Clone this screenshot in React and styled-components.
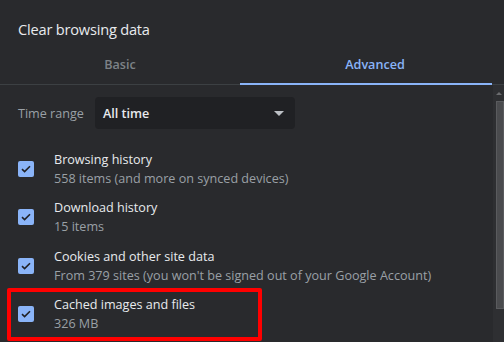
import React from 'react';
import styled, { createGlobalStyle } from 'styled-components';

const GlobalStyle = createGlobalStyle`
    html, body {
        margin: 0;
        padding: 0;
        background: #292a2d;
    }
    body {
        font-family: "Open Sans", "Liberation Sans", sans-serif;
    }
`;

const Dialog = styled.div`
    width: 504px;
    height: 342px;
    background: #292a2d;
    display: flex;
    flex-direction: column;
    overflow: hidden;
`;

const Title = styled.div`
    padding: 19px 0 0 18px;
    height: 25px;
    font-size: 14.6px;
    color: #e8eaed;
    letter-spacing: -0.2px;
`;

const Tabs = styled.div`
    display: flex;
    height: 40px;
    border-bottom: 1px solid #3c4043;
    padding-right: 12px;
`;

const Tab = styled.div`
    width: ${p => (p.active ? '252px' : '240px')};
    box-sizing: border-box;
    padding-left: ${p => (p.active ? '18px' : '0')};
    padding-top: 2px;
    display: flex;
    align-items: center;
    justify-content: center;
    font-size: 12.6px;
    font-weight: 600;
    color: ${p => (p.active ? '#8ab4f8' : '#9aa0a6')};
    opacity: ${p => (p.active ? 1 : 0.75)};
    border-bottom: 2px solid ${p => (p.active ? '#8ab4f8' : 'transparent')};
    margin-bottom: -1px;
`;

const Body = styled.div`
    flex: 1;
    display: flex;
`;

const Content = styled.div`
    flex: 1;
    padding: 12px 0 0 18px;
    display: flex;
    flex-direction: column;
`;

const RangeRow = styled.div`
    display: flex;
    align-items: center;
    gap: 11px;
    margin-bottom: 16px;
`;

const RangeLabel = styled.div`
    font-size: 12.6px;
    color: #9aa0a6;
`;

const Select = styled.div`
    width: 200px;
    height: 32px;
    box-sizing: border-box;
    background: #202124;
    border-radius: 4px;
    display: flex;
    align-items: center;
    justify-content: space-between;
    padding: 0 11px 0 8px;
    font-size: 12.6px;
    font-weight: 600;
    color: #e8eaed;
`;

const Caret = styled.div`
    width: 0;
    height: 0;
    border-left: 5px solid transparent;
    border-right: 5px solid transparent;
    border-top: 5px solid #bdc1c6;
`;

const Row = styled.div`
    position: relative;
    height: 48.3px;
    display: flex;
    align-items: center;
    gap: 20px;

    &::after {
        content: '';
        display: ${p => (p.highlighted ? 'block' : 'none')};
        position: absolute;
        left: -11px;
        top: -2px;
        width: 255px;
        height: 53px;
        box-sizing: border-box;
        border: 4px solid #ff0000;
        border-radius: 2px;
    }
`;

const Box = styled.div`
    width: 16px;
    height: 16px;
    border-radius: 2px;
    background: #8ab4f8;
    display: flex;
    align-items: center;
    justify-content: center;
    flex-shrink: 0;
`;

const Texts = styled.div`
    display: flex;
    flex-direction: column;
    gap: 2px;
`;

const RowTitle = styled.div`
    font-size: 12.6px;
    color: #e8eaed;
    white-space: nowrap;
`;

const RowSub = styled.div`
    font-size: 12.6px;
    color: #9aa0a6;
    white-space: nowrap;
`;

const Scrollbar = styled.div`
    width: 11px;
    background: #2e2f32;
    display: flex;
    flex-direction: column;
    align-items: flex-end;
`;

const Arrow = styled.div`
    margin: 7px 2px 6px 0;
    width: 0;
    height: 0;
    border-left: 3px solid transparent;
    border-right: 3px solid transparent;
    border-bottom: 3px solid #6b6c6f;
`;

const Thumb = styled.div`
    width: 8px;
    height: 208px;
    background: #4a4b4e;
    border: 1px solid #5a5b5e;
    box-sizing: border-box;
`;

const items = [
    { title: 'Browsing history', sub: '558 items (and more on synced devices)' },
    { title: 'Download history', sub: '15 items' },
    { title: 'Cookies and other site data', sub: "From 379 sites (you won't be signed out of your Google Account)" },
    { title: 'Cached images and files', sub: '326 MB', highlighted: true },
];

const Check = () => (
    <svg width="10" height="8" viewBox="0 0 10 8">
        <path d="M1 4.2 L3.6 6.6 L9 1.2" fill="none" stroke="#202124" strokeWidth="1.6" />
    </svg>
);

const App = () => (
    <Dialog>
        <GlobalStyle />
        <Title>Clear browsing data</Title>
        <Tabs>
            <Tab>Basic</Tab>
            <Tab active>Advanced</Tab>
        </Tabs>
        <Body>
            <Content>
                <RangeRow>
                    <RangeLabel>Time range</RangeLabel>
                    <Select>
                        All time
                        <Caret />
                    </Select>
                </RangeRow>
                {items.map(item => (
                    <Row key={item.title} highlighted={item.highlighted}>
                        <Box><Check /></Box>
                        <Texts>
                            <RowTitle>{item.title}</RowTitle>
                            <RowSub>{item.sub}</RowSub>
                        </Texts>
                    </Row>
                ))}
            </Content>
            <Scrollbar>
                <Arrow />
                <Thumb />
            </Scrollbar>
        </Body>
    </Dialog>
);

export default App;
